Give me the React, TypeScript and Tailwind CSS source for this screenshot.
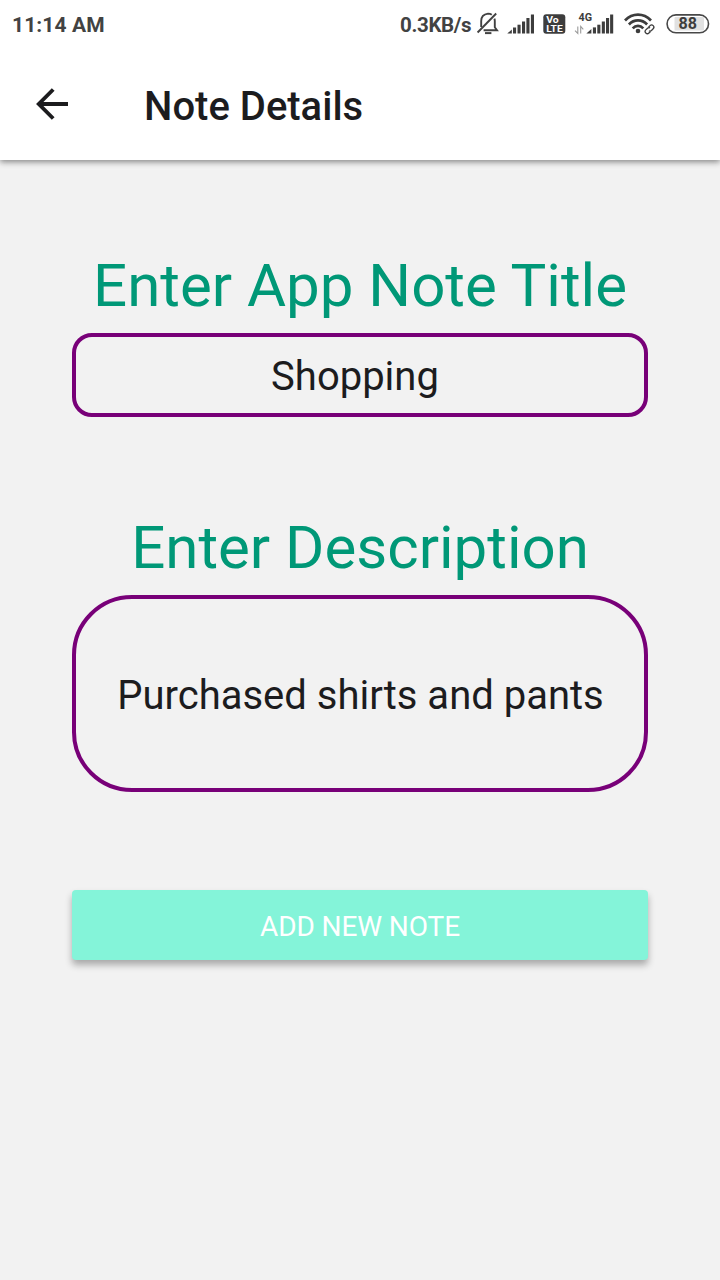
import React from 'react';

function BellOffIcon() {
  return (
    <svg className="ml-[5px] h-[24px] w-[24px] shrink-0" viewBox="0 1.5 24 24" fill="none" stroke="#424242" strokeWidth="1.9">
      <path d="M5.2 16.500V10.500C5.200 6 8 3.600 12 3.100c1.600 0 2.800.4 3.800 1.100M18.400 8.200c.3.800.4 1.700.4 2.600v6l2.200 2.900H7.600" />
      <path d="M1.600 22 20.200 3" />
      <path d="M9 22.600h6.400" strokeWidth="2" />
    </svg>
  );
}

function SignalBars() {
  return (
    <svg className="h-[20px] w-[28px] shrink-0" viewBox="0 0 28 20" fill="#3d3d3d">
      <path d="M0.300 19.500 4.800 15.500v4z" />
      <rect x="6" y="13.500" width="3.100" height="6" />
      <rect x="10.500" y="10.700" width="3.100" height="8.800" />
      <rect x="15" y="7.500" width="3.100" height="12" />
      <rect x="19.400" y="4" width="3.100" height="15.500" />
      <rect x="23.900" y="0.500" width="3.100" height="19" />
    </svg>
  );
}

function VolteIcon() {
  return (
    <svg className="ml-[8px] h-[20px] w-[23px] shrink-0" viewBox="0 0 23 20">
      <rect x="0.300" y="0.200" width="22" height="19.600" rx="3" fill="#3d3d3d" />
      <text x="3.200" y="9" fontSize="9.500" fontWeight="700" fill="#fff" textLength="12.500" lengthAdjust="spacingAndGlyphs">Vo</text>
      <text x="3.200" y="17.700" fontSize="9.500" fontWeight="700" fill="#fff" textLength="16.500" lengthAdjust="spacingAndGlyphs">LTE</text>
    </svg>
  );
}

function MobileDataIcon() {
  return (
    <svg className="ml-[8px] h-[28px] w-[41px] shrink-0" viewBox="0 -1 41 28" fill="#3d3d3d">
      <text x="4.500" y="10" fontSize="11" fontWeight="700" textLength="13.500" lengthAdjust="spacingAndGlyphs">4G</text>
      <path d="M3.800 15.400v7.100L1 19.700M6.700 22.500v-7.100l2.600 3" fill="none" stroke="#9a9a9a" strokeWidth="1.100" />
      <path d="M12.400 22.500l5-4.500v4.500z" />
      <rect x="18.900" y="16.400" width="3.100" height="6.100" />
      <rect x="23.300" y="13.700" width="3.100" height="8.800" />
      <rect x="27.800" y="10.500" width="3.100" height="12" />
      <rect x="32" y="7" width="3.100" height="15.500" />
      <rect x="36.100" y="3.500" width="3.100" height="19" />
    </svg>
  );
}

function WifiIcon() {
  return (
    <svg className="ml-[9px] h-[22px] w-[33px] shrink-0" viewBox="0 0 33 22" fill="none" stroke="#3d3d3d">
      <path d="M1 7.500C8.500-.3 19.500-.3 27 7.500" strokeWidth="2.700" />
      <path d="M4.900 11.500c5.200-5.400 13-5.400 18.200 0" strokeWidth="2.700" />
      <path d="M8.700 15.300c3-3.200 7.600-3.200 10.600 0" strokeWidth="2.700" />
      <circle cx="14" cy="18" r="2.300" fill="#3d3d3d" stroke="none" />
      <g transform="translate(25.500 16.300) rotate(-45)" strokeWidth="1.300">
        <path d="M-.8 2.200h-2.200a2.200 2.200 0 0 1 0-4.400h2.400a2.200 2.200 0 0 1 2 1.600" />
        <path d="M.8-2.200H3a2.200 2.200 0 0 1 0 4.400H.6a2.200 2.200 0 0 1-2-1.600" />
      </g>
    </svg>
  );
}

function Battery() {
  return (
    <svg className="ml-[9px] h-[20px] w-[44px] shrink-0" viewBox="0 0 44 20">
      <rect x="1.100" y="0.900" width="41.400" height="17.900" rx="8.900" fill="#fff" stroke="#484848" strokeWidth="1.600" />
      <rect x="8.500" y="3" width="29.500" height="13.500" rx="1" fill="#e1e1e1" />
      <text x="12.500" y="15.400" fontSize="16.500" fontWeight="700" fill="#3d3d3d" textLength="18.500" lengthAdjust="spacingAndGlyphs">88</text>
    </svg>
  );
}

function StatusBar() {
  return (
    <div className="flex h-12 items-center pl-3 text-[20.5px] leading-6 font-bold text-[#424242]">
      <span className="w-[388px] shrink-0 translate-y-px text-[21px] tracking-[0.1px]">11:14 AM</span>
      <span className="w-[71px] shrink-0 translate-y-px tracking-[-0.35px] whitespace-nowrap">0.3KB/s</span>
      <BellOffIcon />
      <span className="w-[7px] shrink-0" />
      <SignalBars />
      <VolteIcon />
      <MobileDataIcon />
      <WifiIcon />
      <Battery />
    </div>
  );
}

export default function App() {
  return (
    <div className="flex h-[1280px] w-[720px] flex-col overflow-hidden bg-[#f2f2f2] font-[Roboto,sans-serif] text-[#1c1c1e]">
      <header className="z-10 h-40 shrink-0 bg-white shadow-[0_2px_6px_rgba(0,0,0,0.45)]">
        <StatusBar />
        <div className="flex h-28 items-center">
          <button className="ml-[35px] h-[34px] w-[34px]" aria-label="Back">
            <svg className="h-[34px] w-[34px]" viewBox="0 0 34 34" fill="none" stroke="#1c1c1e" strokeWidth="3.900">
              <path d="M33 17H4M18.200 2.500 3.800 17l14.400 14.500" />
            </svg>
          </button>
          <h1 className="ml-[75px] pt-[6px] text-[40px] leading-[48px] font-medium whitespace-nowrap">Note Details</h1>
        </div>
      </header>
      <main className="flex flex-col px-[72px] pt-[90px]">
        <label className="-mx-8 h-[83px] text-center text-[60px] leading-[72px] whitespace-nowrap text-[#009877]">Enter App Note Title</label>
        <div className="h-[84px] rounded-[20px] border-4 border-[#780078] pt-[16px] pr-[10px] text-center text-[40px] leading-[48px]">Shopping</div>
        <label className="mt-[95px] h-[83px] text-center text-[60px] leading-[72px] whitespace-nowrap text-[#009877]">Enter Description</label>
        <div className="flex h-[197px] items-center justify-center rounded-[60px] border-4 border-[#780078] pt-1 pl-px text-[40px] leading-[48px] whitespace-nowrap">Purchased shirts and pants</div>
        <button className="mt-[98px] h-[70px] rounded-[4px] bg-[#84f4d9] pt-[3px] text-[28px] tracking-[-0.1px] text-white shadow-[0_5px_7px_rgba(0,0,0,0.3)]">ADD NEW NOTE</button>
      </main>
    </div>
  );
}
